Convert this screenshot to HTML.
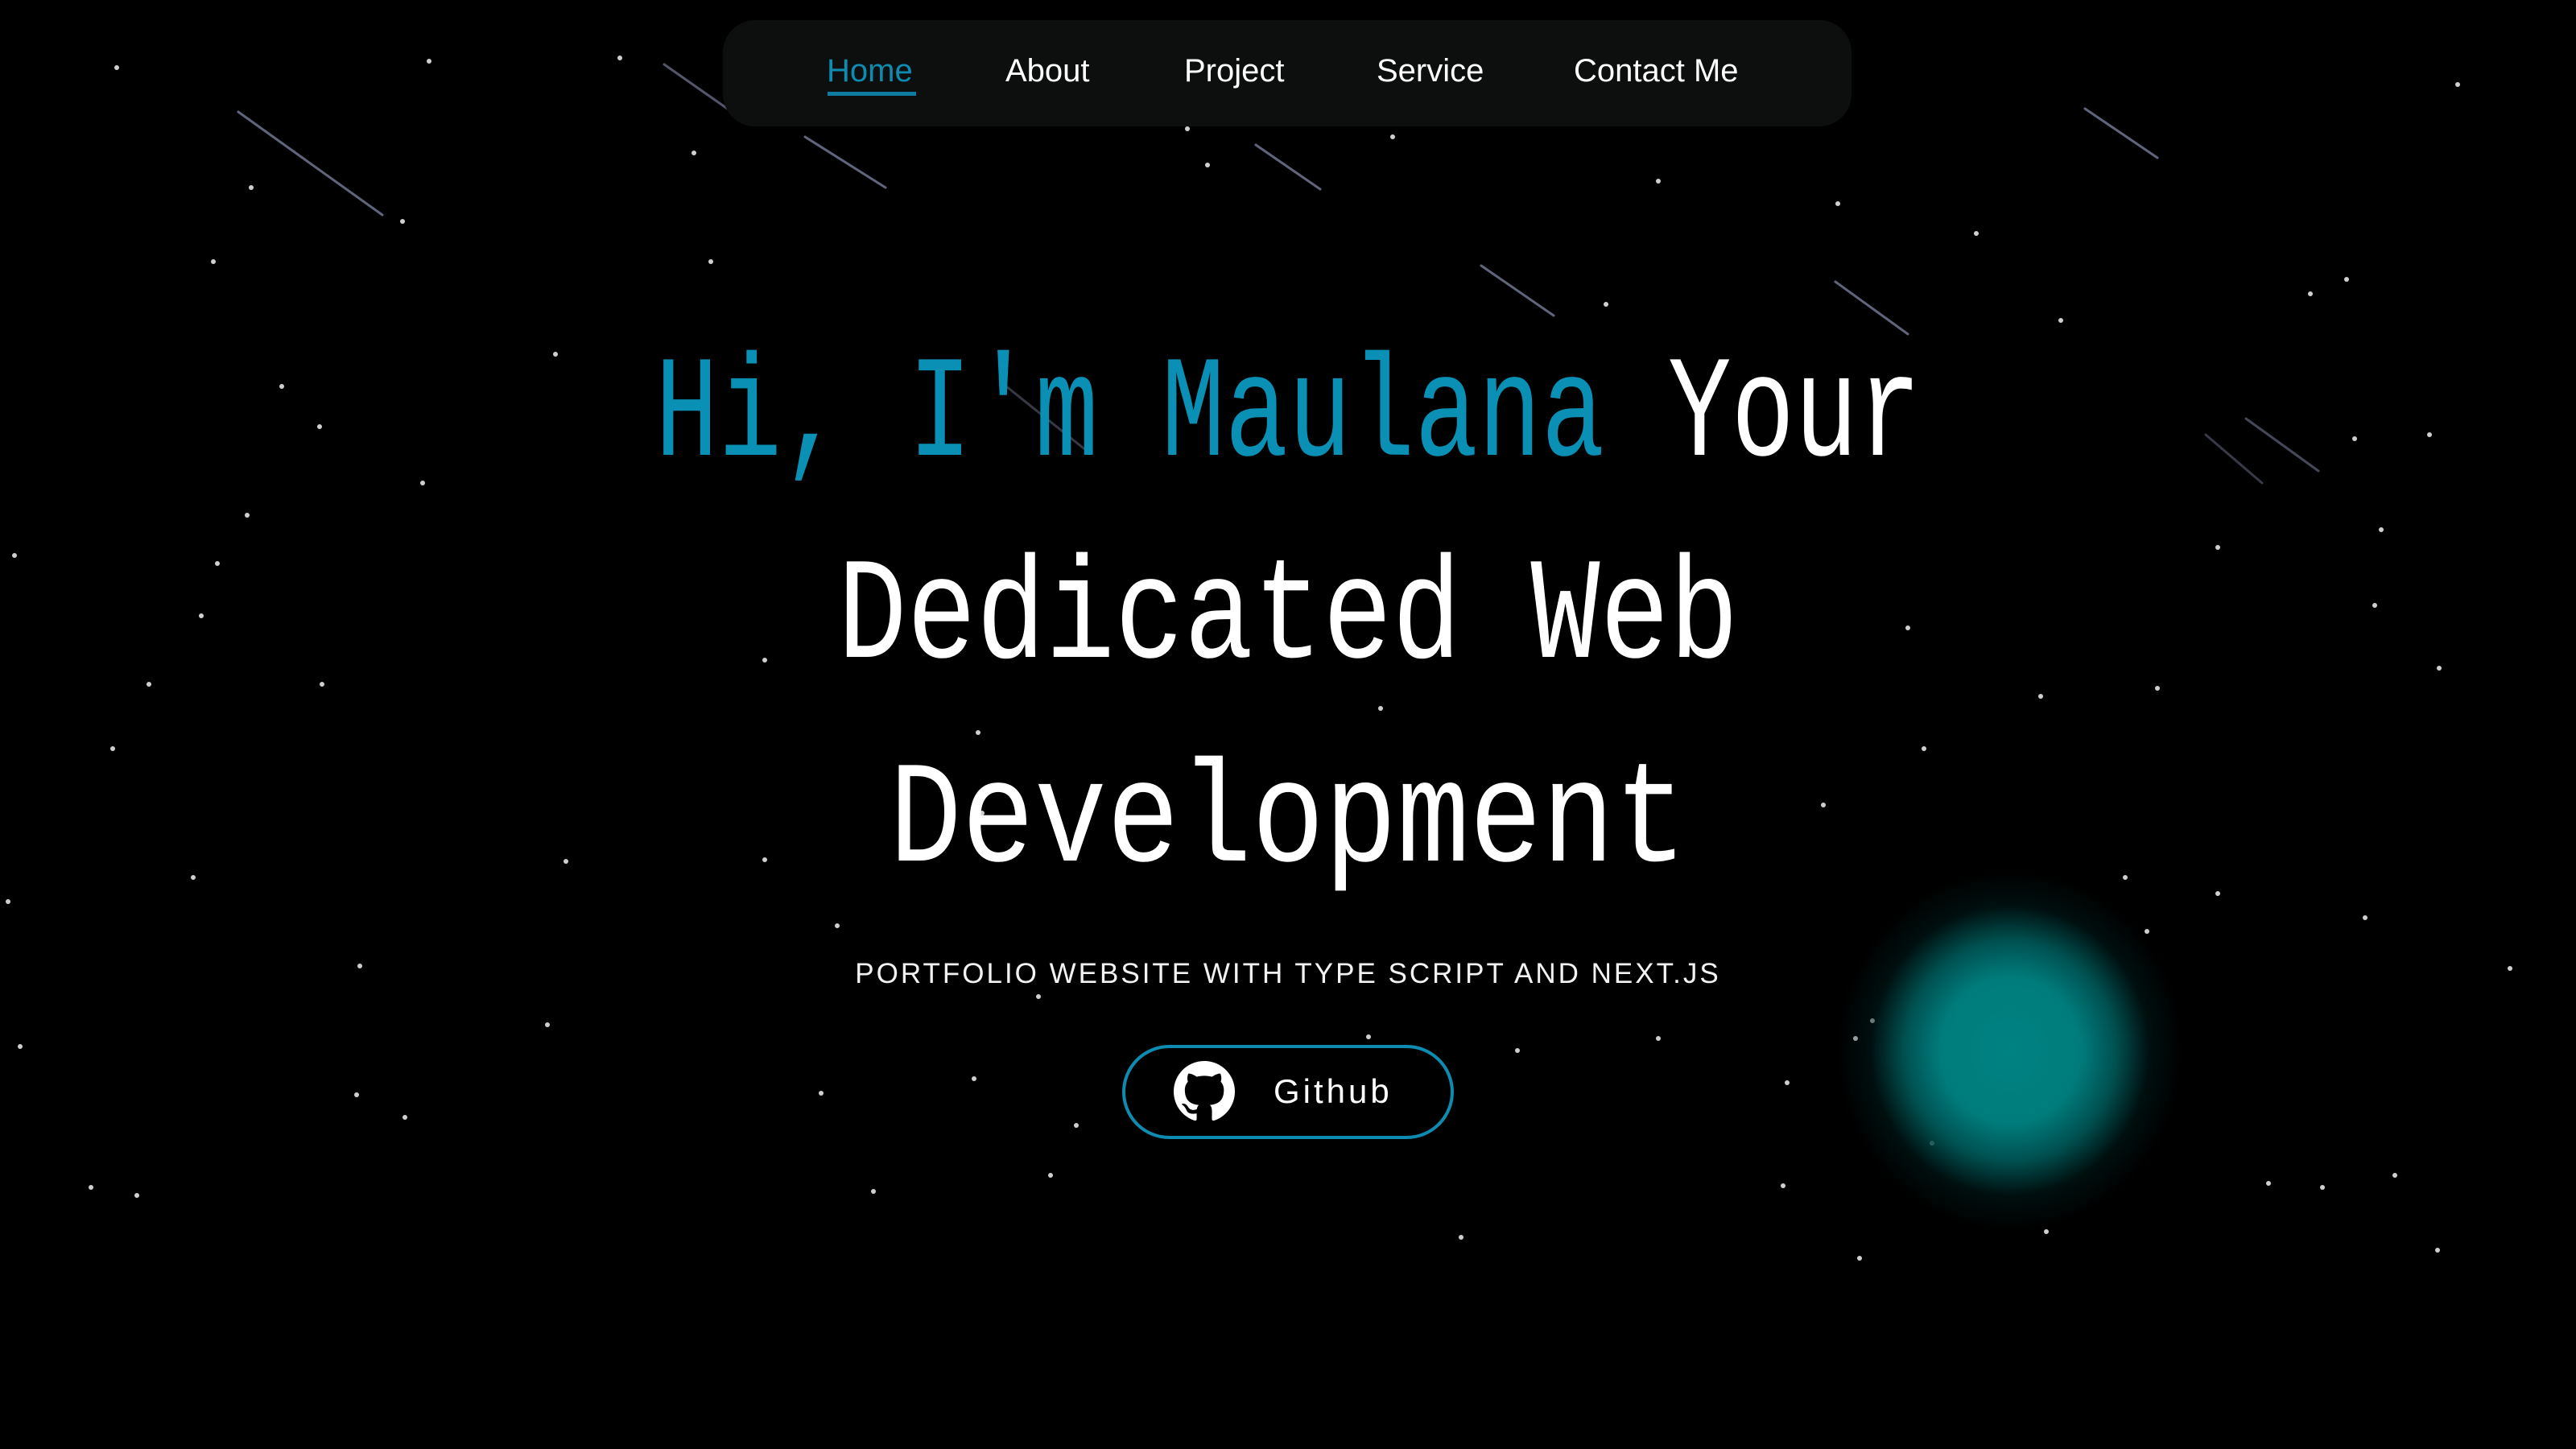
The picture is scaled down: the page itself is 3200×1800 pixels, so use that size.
<!DOCTYPE html>
<html><head><meta charset="utf-8"><style>
html,body{margin:0;padding:0;background:#000;width:3200px;height:1800px;overflow:hidden;position:relative;font-family:"Liberation Sans",sans-serif}
.abs{position:absolute}
nav{position:absolute;left:898px;top:25px;width:1402px;height:132px;background:#0d0f0f;border-radius:40px}
.ul{position:absolute;left:1028px;top:114px;width:110px;height:5px;background:#0e7c9e}
.h{position:absolute;left:0;width:3200px;text-align:center;font-family:"Liberation Mono",monospace;font-size:180px;color:#fff;line-height:1;white-space:pre}
.h span.in{display:inline-block;transform-origin:center}
.c{color:#0a8fb5}
.sub{position:absolute;left:0;width:3200px;top:1190px;text-align:center;color:#f2f2f2;font-size:35px;letter-spacing:3px}
.btn{position:absolute;left:1394px;top:1298px;width:404px;height:109px;border:4px solid #0e8bb0;border-radius:60px}
.btn .t{position:absolute;left:184px;top:30px;color:#fff;font-size:42px;letter-spacing:4px}
.glow{position:absolute;left:2252px;top:1050px;width:490px;height:510px;border-radius:50%;background:radial-gradient(ellipse at center,#008282 0%,#007c7c 25%,#005050 38%,rgba(0,30,30,.5) 50%,rgba(0,0,0,0) 62%)}
.n{position:absolute;top:66px;font-size:40px;color:#fff}
</style></head><body>
<svg class="abs" style="left:0;top:0" width="3200" height="1800">
<g stroke-width="3" stroke-linecap="round">
<line x1="296" y1="139" x2="475" y2="267" stroke="#8a90b0" opacity=".7"/>
<line x1="825" y1="80" x2="905" y2="136" stroke="#8a90b0" opacity=".6"/>
<line x1="1000" y1="170" x2="1100" y2="233" stroke="#8a90b0" opacity=".7"/>
<line x1="1560" y1="180" x2="1640" y2="235" stroke="#8a90b0" opacity=".7"/>
<line x1="1840" y1="330" x2="1930" y2="392" stroke="#8a90b0" opacity=".7"/>
<line x1="2280" y1="350" x2="2370" y2="415" stroke="#8a90b0" opacity=".7"/>
<line x1="2590" y1="135" x2="2680" y2="196" stroke="#8a90b0" opacity=".7"/>
<line x1="2790" y1="520" x2="2880" y2="585" stroke="#8a90b0" opacity=".5"/>
<line x1="2740" y1="540" x2="2810" y2="600" stroke="#8a90b0" opacity=".4"/>
<line x1="1250" y1="480" x2="1350" y2="560" stroke="#8a90b0" opacity=".4"/>
</g>
<g fill="#cfcfcf">
<circle cx="145" cy="84" r="3"/><circle cx="533" cy="76" r="3"/><circle cx="770" cy="72" r="3"/><circle cx="862" cy="190" r="3"/><circle cx="312" cy="233" r="3"/><circle cx="500" cy="275" r="3"/><circle cx="265" cy="325" r="3"/><circle cx="883" cy="325" r="3"/><circle cx="690" cy="440" r="3"/><circle cx="350" cy="480" r="3"/><circle cx="397" cy="530" r="3"/><circle cx="525" cy="600" r="3"/><circle cx="307" cy="640" r="3"/><circle cx="18" cy="690" r="3"/><circle cx="270" cy="700" r="3"/><circle cx="250" cy="765" r="3"/><circle cx="185" cy="850" r="3"/><circle cx="400" cy="850" r="3"/><circle cx="140" cy="930" r="3"/><circle cx="703" cy="1070" r="3"/><circle cx="950" cy="1068" r="3"/><circle cx="240" cy="1090" r="3"/><circle cx="10" cy="1120" r="3"/><circle cx="447" cy="1200" r="3"/><circle cx="680" cy="1273" r="3"/><circle cx="25" cy="1300" r="3"/><circle cx="443" cy="1360" r="3"/><circle cx="503" cy="1388" r="3"/><circle cx="113" cy="1475" r="3"/><circle cx="170" cy="1485" r="3"/><circle cx="1020" cy="1358" r="3"/><circle cx="1210" cy="1340" r="3"/><circle cx="1337" cy="1398" r="3"/><circle cx="1305" cy="1460" r="3"/><circle cx="1815" cy="1537" r="3"/><circle cx="1085" cy="1480" r="3"/><circle cx="1040" cy="1150" r="3"/><circle cx="1290" cy="1238" r="3"/><circle cx="1700" cy="1288" r="3"/><circle cx="1885" cy="1305" r="3"/><circle cx="2060" cy="1290" r="3"/><circle cx="1475" cy="160" r="3"/><circle cx="1500" cy="205" r="3"/><circle cx="1730" cy="170" r="3"/><circle cx="2060" cy="225" r="3"/><circle cx="2283" cy="253" r="3"/><circle cx="2455" cy="290" r="3"/><circle cx="1995" cy="378" r="3"/><circle cx="2560" cy="398" r="3"/><circle cx="2870" cy="365" r="3"/><circle cx="2915" cy="347" r="3"/><circle cx="3053" cy="105" r="3"/><circle cx="2925" cy="545" r="3"/><circle cx="3018" cy="540" r="3"/><circle cx="2958" cy="658" r="3"/><circle cx="2950" cy="752" r="3"/><circle cx="3030" cy="830" r="3"/><circle cx="2680" cy="855" r="3"/><circle cx="2535" cy="865" r="3"/><circle cx="2370" cy="780" r="3"/><circle cx="2755" cy="680" r="3"/><circle cx="2640" cy="1090" r="3"/><circle cx="2755" cy="1110" r="3"/><circle cx="2938" cy="1140" r="3"/><circle cx="2667" cy="1157" r="3"/><circle cx="3118" cy="1203" r="3"/><circle cx="2326" cy="1268" r="3"/><circle cx="2465" cy="1424" r="3"/><circle cx="2542" cy="1530" r="3"/><circle cx="2818" cy="1470" r="3"/><circle cx="2885" cy="1475" r="3"/><circle cx="2975" cy="1460" r="3"/><circle cx="3028" cy="1553" r="3"/><circle cx="2215" cy="1473" r="3"/><circle cx="2310" cy="1563" r="3"/><circle cx="2305" cy="1290" r="3"/><circle cx="2220" cy="1345" r="3"/><circle cx="2490" cy="1170" r="3"/><circle cx="2400" cy="1420" r="3"/><circle cx="1845" cy="1032" r="3"/><circle cx="950" cy="820" r="3"/><circle cx="1215" cy="910" r="3"/><circle cx="1715" cy="880" r="3"/><circle cx="1280" cy="807" r="3"/><circle cx="1220" cy="1010" r="3"/><circle cx="2265" cy="1000" r="3"/><circle cx="2390" cy="930" r="3"/>
</g></svg>
<div class="glow"></div>
<nav></nav>
<div class="n" style="left:1027px;color:#0e8bb0">Home</div>
<div class="ul"></div>
<div class="n" style="left:1249px">About</div>
<div class="n" style="left:1471px">Project</div>
<div class="n" style="left:1710px">Service</div>
<div class="n" style="left:1955px">Contact Me</div>
<div class="h" style="top:428px"><span class="in" style="transform:scaleX(0.728)"><span class="c">Hi, I'm Maulana</span> Your</span></div>
<div class="h" style="top:679px"><span class="in" style="transform:scaleX(0.797)">Dedicated Web</span></div>
<div class="h" style="top:932px"><span class="in" style="transform:scaleX(0.834)">Development</span></div>
<div class="sub">PORTFOLIO WEBSITE WITH TYPE SCRIPT AND NEXT.JS</div>
<div class="btn">
<svg class="abs" style="left:60px;top:16px" width="76" height="76" viewBox="0 0 16 16"><path fill="#fff" d="M8 0C3.58 0 0 3.58 0 8c0 3.54 2.29 6.53 5.47 7.59.4.07.55-.17.55-.38 0-.19-.01-.82-.01-1.49-2.01.37-2.53-.49-2.69-.94-.09-.23-.48-.94-.82-1.13-.28-.15-.68-.52-.01-.53.63-.01 1.08.58 1.23.82.72 1.21 1.87.87 2.33.66.07-.52.28-.87.51-1.07-1.78-.2-3.64-.89-3.64-3.95 0-.87.31-1.59.82-2.15-.08-.2-.36-1.02.08-2.12 0 0 .67-.21 2.2.82.64-.18 1.32-.27 2-.27.68 0 1.36.09 2 .27 1.53-1.04 2.2-.82 2.2-.82.44 1.1.16 1.92.08 2.12.51.56.82 1.27.82 2.15 0 3.07-1.87 3.75-3.65 3.95.29.25.54.73.54 1.48 0 1.07-.01 1.93-.01 2.2 0 .21.15.46.55.38A8.013 8.013 0 0016 8c0-4.42-3.58-8-8-8z"/></svg>
<div class="t">Github</div>
</div>
</body></html>
